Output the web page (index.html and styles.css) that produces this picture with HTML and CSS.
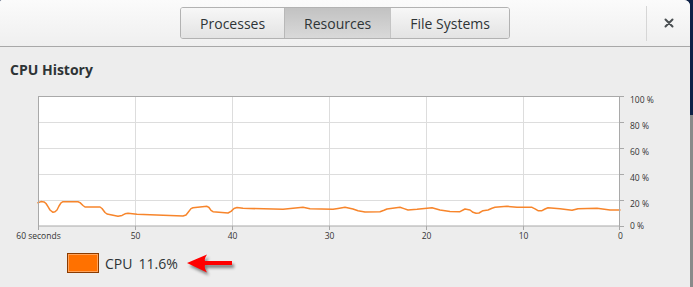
FILE: index.html
```html
<!DOCTYPE html>
<html>
<head>
<meta charset="utf-8">
<link rel="stylesheet" href="styles.css">
</head>
<body>
<div class="window">
  <header class="titlebar">
    <div class="spacer"></div>
    <nav class="tabs">
      <button class="tab">Processes</button>
      <button class="tab active">Resources</button>
      <button class="tab">File Systems</button>
    </nav>
    <div class="end">
      <span class="sep"></span>
      <button class="close" aria-label="Close">
        <svg width="10" height="10" viewBox="0 0 10 10"><path d="M1.5 1.5 L8.5 8.5 M8.5 1.5 L1.5 8.5" stroke="#4a4f52" stroke-width="2" stroke-linecap="round"/></svg>
      </button>
    </div>
  </header>
  <main class="content">
    <h2 class="section-title">CPU History</h2>
    <svg class="chart" width="690" height="155" viewBox="0 0 690 155">
      <rect x="38" y="8" width="582" height="130" fill="#ffffff"/>
      <g stroke="#dddddd" stroke-width="1">
        <path d="M38 34.5 H620 M38 60.5 H620 M38 86.5 H620 M38 112.5 H620"/>
        <path d="M135.5 8 V138 M232.5 8 V138 M329.5 8 V138 M426.5 8 V138 M523.5 8 V138"/>
      </g>
      <polyline fill="none" stroke="#f7852b" stroke-width="1.5" stroke-linejoin="round" stroke-linecap="round" points="38,114.7 41,113.6 44,113.9 46,115.5 48,118.7 50,122 53,124.3 55,123.8 57,122 59,118 61,114.8 63,113.7 78,113.7 80,114.6 83,117.5 85,119 100,119 102,120.5 105,124.5 107,126 118,128.3 122,127.4 125,125.8 128,125.3 137,126.3 183,128 186,127 188,124.5 191,120.6 193,119.7 207,118.3 209,119.5 211,122.4 213,123.7 228,125 231,123.4 234,120.5 237,119.5 243,120.3 283,121.3 303,119.3 310,120.7 333,121.3 338,120.4 345,119.3 353,121 358,122.8 365,124 380,123.7 384,122.3 387,121 400,119.3 404,120.6 408,122 417,121.3 432,119.7 440,122 450,123.5 460,123.7 465,121 470,122 473,124.3 476,125.3 479,125 483,122.7 488,122 492,120.2 495,119.3 507,118.3 517,119.3 532,119.3 535,120.8 538,122.7 542,122.7 545,121 548,119.7 560,120.7 572,122.3 578,120.7 597,120.3 610,122 620,122"/>
      <g stroke="#a9a9a9" stroke-width="1" fill="none">
        <rect x="38.5" y="8.5" width="581" height="129.5"/>
        <path d="M38.5 138 V142 M135.5 138 V142 M232.5 138 V142 M329.5 138 V142 M426.5 138 V142 M523.5 138 V142 M619.5 138 V142"/>
        <path d="M620 8.5 H624 M620 34.5 H624 M620 60.5 H624 M620 86.5 H624 M620 112.5 H624 M620 138.5 H624"/>
      </g>
      <g class="axis-label">
        <text x="630" y="15">100 %</text>
        <text x="630" y="41">80 %</text>
        <text x="630" y="67">60 %</text>
        <text x="630" y="93">40 %</text>
        <text x="630" y="119">20 %</text>
        <text x="630" y="141">0 %</text>
      </g>
      <g class="axis-label" text-anchor="middle">
        <text x="38.5" y="151">60 seconds</text>
        <text x="135.5" y="151">50</text>
        <text x="232.5" y="151">40</text>
        <text x="329.5" y="151">30</text>
        <text x="426.5" y="151">20</text>
        <text x="523.5" y="151">10</text>
        <text x="620.5" y="151">0</text>
      </g>
    </svg>
    <div class="legend">
      <span class="swatch"></span>
      <span class="legend-name">CPU</span>
      <span class="legend-value">11.6%</span>
      <svg class="arrow" width="52" height="24" viewBox="0 0 52 24">
        <path d="M1 10 L21 1.5 Q18 6 19 8 L46 8 L46 12 L19 12 Q18 15 21 19.5 Z" fill="#ff0000"/>
      </svg>
    </div>
  </main>
</div>
</body>
</html>
```
FILE: styles.css
```css
html, body {
  margin: 0;
  padding: 0;
}
body {
  width: 693px;
  height: 287px;
  overflow: hidden;
  background: linear-gradient(to bottom, #0f2247 0, #0f2247 115px, #8a8a8a 115px);
  font-family: "Open Sans", "Noto Sans", sans-serif;
  color: #2e3436;
}
.window {
  width: 690px;
  height: 287px;
  background: #ededed;
  border-radius: 2px 6px 0 0;
  overflow: hidden;
}
.titlebar {
  height: 46px;
  border-bottom: 1px solid #a8a8a8;
  background: linear-gradient(to bottom, #fbfbfb, #efefef);
  display: grid;
  grid-template-columns: 1fr auto 1fr;
  align-items: center;
}
.tabs {
  display: flex;
  height: 32px;
  border: 1px solid #b2b2b2;
  border-radius: 3px;
  overflow: hidden;
  box-sizing: border-box;
}
.tab {
  font: 14px "Open Sans", "Noto Sans", sans-serif;
  color: #2e3436;
  border: 0;
  border-left: 1px solid #c4c4c4;
  padding: 0 19px;
  background: linear-gradient(to bottom, #f7f7f7, #e3e3e3);
  margin: 0;
}
.tab:first-child {
  border-left: 0;
}
.tab.active {
  background: linear-gradient(to bottom, #c2c2c2, #d9d9d9);
  border-left-color: #b8b8b8;
}
.end {
  display: flex;
  justify-content: flex-end;
  align-items: center;
  height: 46px;
}
.sep {
  width: 1px;
  height: 35px;
  background: #d6d6d6;
}
.close {
  width: 43px;
  height: 35px;
  border: 0;
  background: transparent;
  padding: 0;
  display: flex;
  align-items: center;
  justify-content: center;
}
.content {
  display: flex;
  flex-direction: column;
}
.section-title {
  margin: 13px 0 0 10px;
  font-size: 14px;
  font-weight: bold;
  line-height: 19px;
  color: #2e3436;
}
.chart {
  display: block;
  margin-top: 9px;
}
.axis-label {
  font-family: "Open Sans", "Noto Sans", sans-serif;
  font-size: 8.5px;
  fill: #333333;
}
.legend {
  display: flex;
  align-items: center;
  margin: 10px 0 0 67px;
  height: 20px;
  font-size: 14px;
}
.swatch {
  width: 32px;
  height: 20px;
  box-sizing: border-box;
  background: #ff7100;
  border: 1px solid #8a3b00;
  box-shadow: inset 0 0 0 1px #ffa25a;
}
.legend-name {
  margin-left: 6px;
}
.legend-value {
  margin-left: 6px;
}
.arrow {
  margin-left: 8px;
  margin-top: 3px;
  filter: drop-shadow(2px 3px 1.5px rgba(0, 0, 0, 0.45));
}
```
